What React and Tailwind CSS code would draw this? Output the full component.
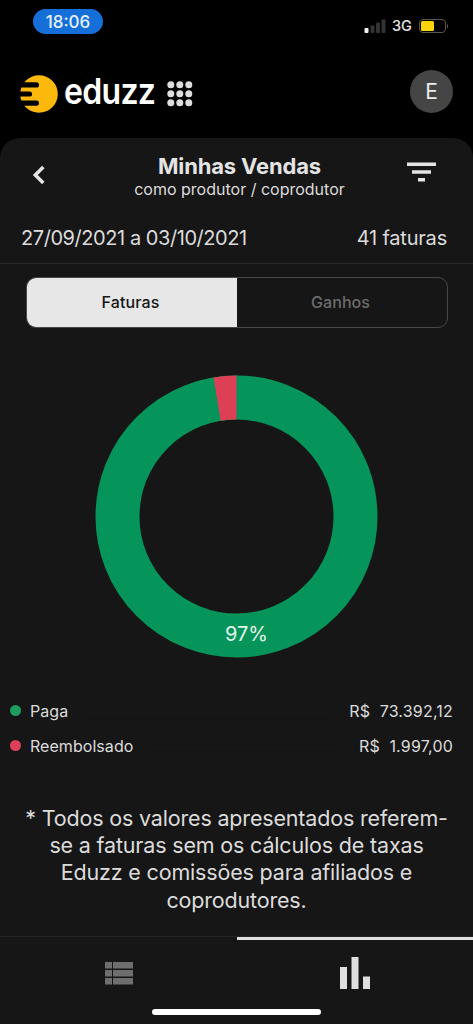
import React from 'react';

const RADIUS = 119;
const CIRCUMFERENCE = 2 * Math.PI * RADIUS;

const invoices = [
  { label: 'Paga', amount: '73.392,12', value: 73392.12, dot: 'bg-[#1c9c5e]' },
  { label: 'Reembolsado', amount: '1.997,00', value: 1997, dot: 'bg-[#dd4058]' },
];

const StatusBar = () => (
  <div className="flex h-[44px] items-start justify-between pl-[33px] pr-[24px] pt-[9px]">
    <div className="flex h-[25px] w-[70px] items-center justify-center rounded-full bg-[#1470d8] pt-[2px] text-[17px] font-medium text-[#e6f0fb]">
      18:06
    </div>
    <div className="flex h-[34px] items-center">
      <svg width="22" height="14" viewBox="0 0 22 14">
        <rect x="0.5" y="9" width="4" height="5" rx="1" fill="#f4f4f4" />
        <rect x="6.5" y="6.5" width="4" height="7.5" rx="1" fill="#333" />
        <rect x="12" y="3.5" width="4" height="10.5" rx="1" fill="#333" />
        <rect x="17.5" y="0.5" width="4" height="13.5" rx="1" fill="#333" />
      </svg>
      <span className="ml-[6px] w-[20px] text-[14.5px] font-medium tracking-[-0.2px] text-[#e4e4e4]">3G</span>
      <svg className="ml-[7px]" width="30" height="15" viewBox="0 0 30 15">
        <rect x="0.5" y="0.5" width="26" height="13" rx="3.5" fill="none" stroke="#5a5544" />
        <rect x="2" y="2" width="13" height="10" rx="1.5" fill="#fdd30b" />
        <path d="M28 5v4.500c1.300-.6 1.300-3.900 0-4.500z" fill="#6d6548" />
      </svg>
    </div>
  </div>
);

const Logo = () => (
  <div className="flex items-center pt-[5px]">
    <svg width="38" height="40" viewBox="0 0 38 40">
      <circle cx="19" cy="20" r="18.800" fill="#fdb90b" />
      <path
        d="M0 8.300h16.400a2.600 2.600 0 0 1 0 5.200H0zM0 17.400h9.500a2.600 2.600 0 0 1 0 5.200H0zM0 26.500h16.400a2.600 2.600 0 0 1 0 5.200H0z"
        fill="#000"
      />
    </svg>
    <div className="ml-[6px] w-[95px]">
      <span className="inline-block origin-left scale-x-[0.89] pb-[5px] text-[36px] font-semibold leading-[44px] tracking-[-0.8px] text-white">
        eduzz
      </span>
    </div>
    <svg className="ml-[8px]" width="26" height="26" viewBox="0 0 26 26" fill="#dedede">
      {[3.8, 12.8, 21.8].map((y) =>
        [3.8, 12.8, 21.8].map((x) => <circle key={`${x}-${y}`} cx={x} cy={y} r="3.500" />)
      )}
    </svg>
  </div>
);

const Donut = () => {
  const total = invoices.reduce((sum, item) => sum + item.value, 0);
  const refunded = (invoices[1].value / total) * CIRCUMFERENCE;

  return (
    <svg width="283" height="284" viewBox="0 0 283 284">
      <circle cx="141.5" cy="141.5" r={RADIUS} fill="none" stroke="#059459" strokeWidth="44" />
      <circle
        cx="141.5"
        cy="141.5"
        r={RADIUS}
        fill="none"
        stroke="#dd4055"
        strokeWidth="44"
        strokeDasharray={`${refunded} ${CIRCUMFERENCE - refunded}`}
        strokeDashoffset={refunded}
        transform="rotate(-90 141.5 141.5)"
      />
      <text x="151.5" y="266" textAnchor="middle" fill="#e2f3ea" className="text-[20px]">97%</text>
    </svg>
  );
};

export default function App() {
  return (
    <div className="flex h-[1024px] w-[473px] flex-col overflow-hidden bg-black font-['Inter',sans-serif] text-[#dcdcdc]">
      <StatusBar />
      <header className="flex h-[94px] items-center justify-between pl-[20px] pr-[20px]">
        <Logo />
        <div className="flex size-[43px] items-center justify-center rounded-full bg-[#454545] pt-[2px] text-[21px] text-[#ececec]">
          E
        </div>
      </header>

      <main className="flex flex-1 flex-col rounded-t-[20px] bg-[#161616]">
        <div className="flex h-[74px] items-start pl-[32px] pr-[37px]">
          <svg className="mr-[26px] mt-[27px]" width="14" height="20" viewBox="0 0 14 20">
            <path d="M11.300 2 3.300 10l8 8" fill="none" stroke="#e4e4e4" strokeWidth="3.500" />
          </svg>
          <div className="flex-1 pt-[15px] text-center">
            <h1 className="whitespace-nowrap text-[22px] font-bold leading-[26px] tracking-[-0.15px] text-[#e4e4e4]">
              Minhas Vendas
            </h1>
            <p className="whitespace-nowrap text-[16px] leading-[20px]">como produtor / coprodutor</p>
          </div>
          <svg className="mt-[24px]" width="29" height="20" viewBox="0 0 29 20" fill="#e4e4e4">
            <path d="M0 .5h29v3.500H0zM5 8.300h19v3.400H5zM11 16h7v3.500h-7z" />
          </svg>
        </div>

        <div className="flex h-[52px] items-center justify-between border-b border-[#2a2a2a] pl-[21px] pr-[26px] text-[20px]">
          <span className="whitespace-nowrap tracking-[-0.44px]">27/09/2021 a 03/10/2021</span>
          <span className="whitespace-nowrap tracking-[-0.2px]">41 faturas</span>
        </div>

        <div className="ml-[26px] mr-[25px] mt-[13px] flex h-[51px] overflow-hidden rounded-[10px] border border-[#484848] text-[16px] font-medium tracking-[0.1px]">
          <button className="w-[210px] bg-[#e7e7e7] pb-[2px] pr-[3px] text-[#161616]">Faturas</button>
          <button className="flex-1 pb-[2px] pr-[3px] text-[#6c6c6c]">Ganhos</button>
        </div>

        <div className="mt-[47px] flex justify-center">
          <Donut />
        </div>

        <ul className="mt-[34px] pl-[10px] pr-[20px] text-[16px]">
          {invoices.map((item) => (
            <li key={item.label} className="flex h-[35px] items-center">
              <span className={`size-[11px] rounded-full ${item.dot}`} />
              <span className="ml-[9px] tracking-[0.05px]">{item.label}</span>
              <span className="mx-[19px] mt-[6px] h-px flex-1 bg-[#1a1a1a]" />
              <span className="whitespace-pre tracking-[0.2px]">R$  {item.amount}</span>
            </li>
          ))}
        </ul>

        <p className="mt-[42px] text-center text-[21.5px] leading-[27.200px] tracking-[-0.17px]">
          * Todos os valores apresentados referem-
          <br />
          se a faturas sem os cálculos de taxas
          <br />
          Eduzz e comissões para afiliados e
          <br />
          coprodutores.
        </p>

        <nav className="mt-auto flex h-[88px] border-t border-[#242424]">
          <div className="flex w-[237px] justify-center pt-[25px]">
            <svg width="28" height="23" viewBox="0 0 28 23" fill="#6e6e6e">
              <path d="M0 0h7v6.500H0zM8 0h20v6.500H8zM0 8h7v6.500H0zM8 8h20v6.500H8zM0 16h7v6.500H0zM8 16h20v6.500H8z" />
            </svg>
          </div>
          <div className="flex flex-1 justify-center border-t-[3px] border-[#dedede] pt-[17px]">
            <svg width="30" height="33" viewBox="0 0 30 33" fill="#dedede">
              <path d="M0 10h7v22H0zM11.500 0h7v32h-7zM23 19.500h7V32h-7z" />
            </svg>
          </div>
        </nav>
      </main>
      <div className="absolute left-[152px] top-[1009px] h-[6px] w-[169px] rounded-full bg-white" />
    </div>
  );
}
